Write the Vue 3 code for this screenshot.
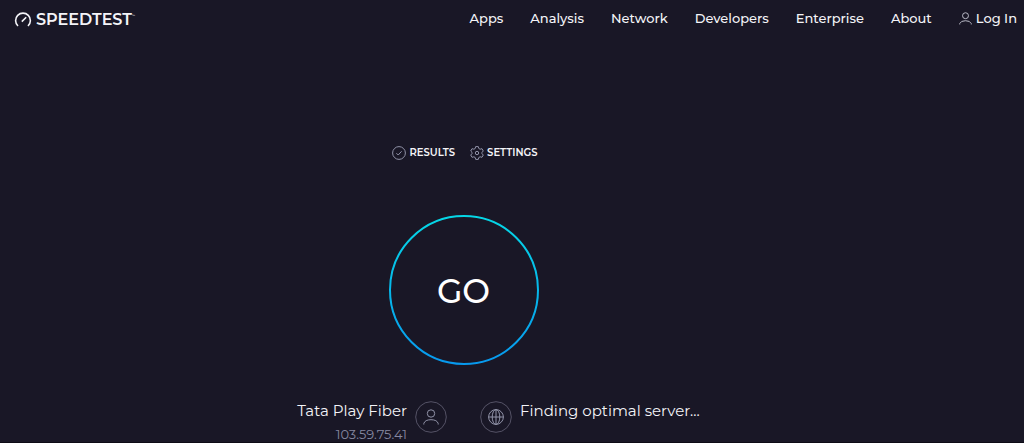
<script setup>
const links = ['Apps', 'Analysis', 'Network', 'Developers', 'Enterprise', 'About']
</script>

<template>
  <div class="page">
    <header class="header">
      <a class="brand" href="#" aria-label="Speedtest">
        <svg class="gauge" viewBox="0 0 18 16" aria-hidden="true">
          <path d="M4 14A7.4 7.4 0 1 1 14 14" />
          <path d="M7.8 9.6L12.2 5.2" />
        </svg>
        <span class="wordmark">SPEEDTEST</span><span class="mark">™</span>
      </a>
      <nav class="nav">
        <a v-for="link in links" :key="link" href="#">{{ link }}</a>
        <a class="login" href="#">
          <svg class="login-icon" viewBox="0 0 14 14" aria-hidden="true">
            <circle cx="7" cy="4" r="3.2" />
            <path d="M.8 13.4V12.4Q2 9.4 7 9.4T13.2 12.4V13.4" />
          </svg>
          Log In
        </a>
      </nav>
    </header>

    <main class="main">
      <div class="tools">
        <a class="tool" href="#">
          <svg viewBox="0 0 14 14" aria-hidden="true">
            <circle cx="7" cy="7" r="6.4" />
            <path d="M4.4 7.2L6.2 9L9.6 5.3" />
          </svg>
          RESULTS
        </a>
        <a class="tool" href="#">
          <svg viewBox="0 0 14 14" aria-hidden="true">
            <path d="M5.7 .6H8.3L8.8 2.5L10.1 3.2L12 2.7L13.3 5L12 6.3V7.7L13.3 9L12 11.3L10.1 10.8L8.8 11.5L8.3 13.4H5.7L5.2 11.5L3.9 10.8L2 11.3L.7 9L2 7.7V6.3L.7 5L2 2.7L3.9 3.2L5.2 2.5Z" />
            <circle cx="7" cy="7" r="1.7" />
          </svg>
          SETTINGS
        </a>
      </div>

      <button class="go" type="button">
        <svg class="ring" viewBox="0 0 150 150" aria-hidden="true">
          <defs>
            <linearGradient id="ring-stroke" x1="0" y1="0" x2="0" y2="1">
              <stop offset="0" stop-color="#05d7e6" />
              <stop offset="1" stop-color="#0799ee" />
            </linearGradient>
          </defs>
          <circle cx="75" cy="75" r="74" />
        </svg>
        <span class="go-label">GO</span>
      </button>

      <div class="connection">
        <section class="side provider">
          <div class="details">
            <div class="name">Tata Play Fiber</div>
            <div class="address">103.59.75.41</div>
          </div>
          <svg class="badge" viewBox="0 0 32 32" aria-hidden="true">
            <circle class="outline" cx="16" cy="16" r="15.3" />
            <circle cx="16" cy="12.5" r="3.7" />
            <path d="M8.8 23.5V22.5Q10 18.7 16 18.7T23.2 22.5V23.5" />
          </svg>
        </section>
        <section class="side server">
          <svg class="badge" viewBox="0 0 32 32" aria-hidden="true">
            <circle class="outline" cx="16" cy="16" r="15.3" />
            <circle cx="16" cy="16" r="7.4" />
            <ellipse cx="16" cy="16" rx="3.8" ry="7.4" />
            <path d="M16 8.6V23.4M8.6 16H23.4" />
          </svg>
          <div class="name">Finding optimal server...</div>
        </section>
      </div>
    </main>
  </div>
</template>

<style>
body {
  background: #191726;
}
</style>

<style scoped>
.page {
  display: flex;
  flex-direction: column;
  min-height: 100vh;
  box-sizing: border-box;
  border-bottom: 1px solid #0d0b16;
  background: #191726;
  color: #f4f4f8;
  font-family: Montserrat, Inter, "Liberation Sans", sans-serif;
}

a {
  color: inherit;
  text-decoration: none;
}

svg {
  flex: none;
  fill: none;
  stroke: #9193a8;
  stroke-width: 1;
}

.header {
  display: flex;
  align-items: center;
  justify-content: space-between;
  height: 38px;
  padding: 0 7px 0 14px;
}

.brand {
  display: flex;
  align-items: center;
  padding-top: 2px;
}

.gauge {
  width: 18px;
  height: 16px;
  margin-right: 4px;
  stroke: #f4f4f8;
  stroke-width: 1.6;
}

.wordmark {
  font-size: 16px;
  font-weight: 600;
  line-height: 20px;
}

.mark {
  align-self: flex-start;
  font-size: 3px;
  line-height: 12px;
}

.nav {
  display: flex;
  gap: 27px;
  padding-bottom: 2px;
  font-size: 13px;
  font-weight: 500;
  line-height: 20px;
}

.login {
  display: flex;
  align-items: center;
  gap: 4px;
}

.login-icon {
  width: 13px;
  height: 13px;
  stroke: #c4c5d0;
}

.main {
  display: flex;
  flex-direction: column;
  align-items: center;
  margin-right: 97px;
  padding-top: 107px;
}

.tools {
  display: flex;
  gap: 15px;
  padding-left: 3px;
}

.tool {
  display: flex;
  align-items: center;
  gap: 3px;
  font-size: 10px;
  font-weight: 600;
  line-height: 16px;
}

.tool svg {
  width: 14px;
  height: 14px;
}

.go {
  display: grid;
  place-items: center;
  width: 150px;
  height: 150px;
  margin-top: 54px;
  padding: 0;
  border: 0;
  border-radius: 50%;
  background: none;
  color: #fff;
  font: 500 33px/40px Montserrat, Inter, "Liberation Sans", sans-serif;
  cursor: pointer;
}

.go > * {
  grid-area: 1 / 1;
}

.go-label {
  padding-top: 2px;
}

.ring {
  width: 150px;
  height: 150px;
  stroke: url(#ring-stroke);
  stroke-width: 2;
}

.connection {
  display: grid;
  grid-template-columns: 1fr 1fr;
  gap: 33px;
  width: 100%;
  margin-top: 36px;
}

.side {
  display: flex;
  align-items: flex-start;
  gap: 8px;
}

.provider {
  justify-content: flex-end;
  text-align: right;
}

.name {
  font-size: 15px;
  line-height: 20px;
}

.address {
  margin-top: 5px;
  color: #8587a0;
  font-size: 13px;
  line-height: 16px;
}

.badge {
  width: 32px;
  height: 32px;
}

.badge .outline {
  stroke: #555366;
}
</style>
